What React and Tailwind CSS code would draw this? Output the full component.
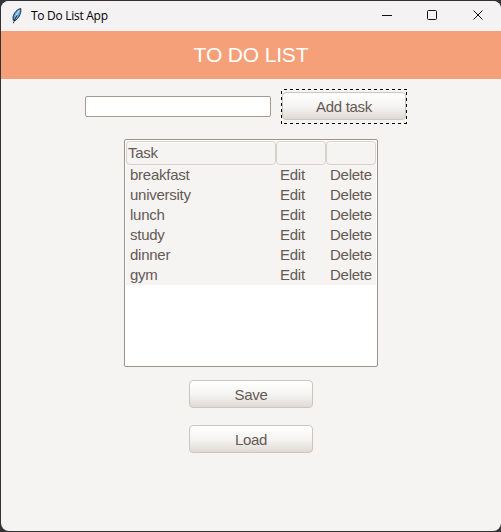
import React from "react";

const tasks = ["breakfast", "university", "lunch", "study", "dinner", "gym"];

function Feather() {
  return (
    <svg width="10" height="16" viewBox="0 0 10 16">
      <path d="M8.8 .6C5.4 1 2 4.6 1 9L1.2 12.2 3 12.6C6.4 10.5 9.4 6 8.8.6Z" fill="#58a4ea" stroke="#1a1d22" strokeWidth=".9" />
      <path d="M7.2 2.4 3.6 8.4" stroke="#b4dbff" strokeWidth="1.3" />
      <path d="M5.2 7.2 3 11 1.3 15.3" stroke="#111" strokeWidth=".8" fill="none" />
    </svg>
  );
}

function TitleBar() {
  return (
    <div className="flex h-[30px] shrink-0 items-center bg-[#f4f2f3] pl-[11px] text-black">
      <Feather />
      <span className="ml-[9px] font-['Open_Sans',sans-serif] text-[12px] leading-[30px] tracking-[-0.28px] whitespace-nowrap">To Do List App</span>
      <svg className="ml-auto" width="120" height="30" viewBox="0 0 120 30" fill="none" stroke="#111">
        <path d="M1 14.5H11" />
        <rect x="46.5" y="9.5" width="9" height="9" rx="1" />
        <path d="M92.5 9.5 101.5 18.5M101.5 9.5 92.5 18.5" />
      </svg>
    </div>
  );
}

function Button({ children }) {
  return (
    <button className="flex h-7 w-[124px] items-center justify-center rounded-[4px] border border-[#cfc5be] bg-linear-to-b from-white via-[#f6f5f4] to-[#dfdad4] pt-px text-[15px] leading-5 tracking-[-0.28px] text-[#655954]">
      {children}
    </button>
  );
}

function FocusRing() {
  return (
    <svg className="pointer-events-none absolute inset-0" width="126" height="35" fill="none" stroke="#000" strokeDasharray="3 3">
      <path d="M3 .5H126" />
      <path d="M125.5 3V35" />
      <path d="M.5 2V35" />
      <path d="M3 34.5H126" />
    </svg>
  );
}

function Heading({ children }) {
  return <div className="h-6 rounded-[4px] border border-[#d9d2ca] bg-[#f5f4f2] pl-px leading-[22px] shadow-[inset_0_1px_0_#fff]">{children}</div>;
}

export default function App() {
  return (
    <div className="h-[532px] w-[501px] bg-[#343235] pt-px pb-px pl-px font-['Liberation_Sans',Arial,sans-serif]">
      <div className="flex h-[530px] w-[500px] flex-col overflow-hidden rounded-[8px] bg-[#f5f4f2]">
        <TitleBar />
        <header className="h-12 shrink-0 bg-[#f5a079] text-center text-[21px] leading-[48px] tracking-[-0.15px] text-white">TO DO LIST</header>
        <div className="mt-[10px] flex h-[35px] pl-[84px]">
          <input aria-label="Task" className="mt-[7px] h-[21px] w-[186px] rounded-[2px] border border-[#a9998e] bg-white px-1 text-[15px] outline-none" />
          <div className="relative ml-[10px] h-[35px] w-[126px] px-px pt-[3px]">
            <Button>Add task</Button>
            <FocusRing />
          </div>
        </div>
        <div className="mt-[15px] ml-[123px] h-[228px] w-[254px] shrink-0 rounded-[2px] border border-[#9e9288] bg-white p-px text-[15px] tracking-[-0.26px] text-[#655954]">
          <div className="grid grid-cols-[150px_50px_50px] bg-[#f5f4f2]">
            <Heading>Task</Heading>
            <Heading />
            <Heading />
          </div>
          {tasks.map((task) => (
            <div key={task} className="grid h-5 grid-cols-[150px_50px_50px] bg-[#f5f4f2] leading-5">
              <span className="pl-1">{task}</span>
              <span className="pl-1">Edit</span>
              <span className="pl-1">Delete</span>
            </div>
          ))}
        </div>
        <div className="mt-[13px] flex flex-col gap-[17px] pl-[188px]">
          <Button>Save</Button>
          <Button>Load</Button>
        </div>
      </div>
    </div>
  );
}
